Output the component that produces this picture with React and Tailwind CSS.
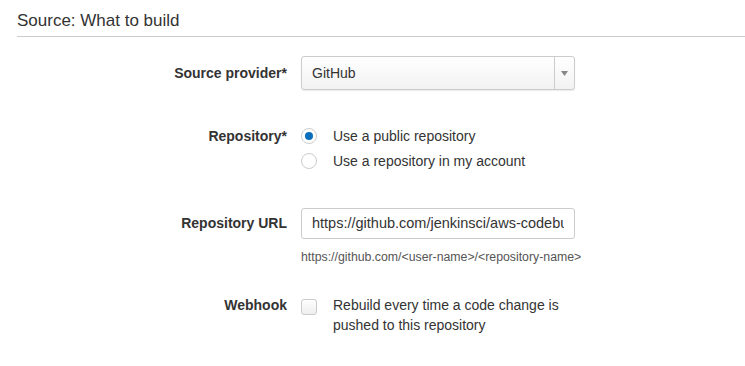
import React from 'react';

const App = () => {
  return (
    <div className="min-h-screen bg-white font-['Liberation_Sans',Arial,sans-serif] text-[#333]">
      <div className="pl-[17px] pt-[10px]">
        <h2 className="text-[17px] leading-[22px] text-[#333] pb-[4px] border-b border-[#ccc]">Source: What to build</h2>
      </div>

      {/* Source provider */}
      <div className="flex items-center mt-[19px]">
        <div className="w-[287px] text-right font-bold text-[14px]">Source provider*</div>
        <div className="ml-[14px] w-[274px] h-[34px] flex border border-[#ccc] rounded-[3px] bg-gradient-to-b from-white to-[#f2f2f2] shadow-[0_1px_1px_rgba(0,0,0,0.08)]">
          <div className="flex-1 flex items-center pl-[10px] text-[14px]">GitHub</div>
          <div className="w-[20px] border-l border-[#ccc] flex items-center justify-center">
            <svg width="7" height="5" viewBox="0 0 7 5"><path d="M0 0h7L3.5 5z" fill="#888" /></svg>
          </div>
        </div>
      </div>

      {/* Repository */}
      <div className="flex mt-[36px]">
        <div className="w-[287px] text-right font-bold text-[14px] leading-[20px]">Repository*</div>
        <div className="ml-[14px] flex flex-col gap-[5px] text-[14px]">
          <label className="flex items-center h-[20px]">
            <span className="w-[16px] h-[16px] rounded-full border border-[#ccc] bg-white flex items-center justify-center">
              <span className="w-[8px] h-[8px] rounded-full bg-[#0a6ebd]" />
            </span>
            <span className="ml-[16px]">Use a public repository</span>
          </label>
          <label className="flex items-center h-[20px]">
            <span className="w-[16px] h-[16px] rounded-full border border-[#ccc] bg-white" />
            <span className="ml-[16px]">Use a repository in my account</span>
          </label>
        </div>
      </div>

      {/* Repository URL */}
      <div className="flex mt-[37px]">
        <div className="w-[287px] text-right font-bold text-[14px] leading-[31px]">Repository URL</div>
        <div className="ml-[14px]">
          <div className="w-[274px] h-[31px] border border-[#ccc] rounded-[3px] flex items-center px-[10px] text-[14.5px]">
            <span className="block overflow-hidden whitespace-nowrap">https://github.com/jenkinsci/aws-codebuild-plugin</span>
          </div>
          <div className="text-[12.3px] text-[#555] mt-[9px] whitespace-nowrap">https://github.com/&lt;user-name&gt;/&lt;repository-name&gt;</div>
        </div>
      </div>

      {/* Webhook */}
      <div className="flex mt-[29px]">
        <div className="w-[287px] text-right font-bold text-[14px] leading-[20px]">Webhook</div>
        <div className="ml-[14px] flex items-start">
          <span className="mt-[4px] w-[16px] h-[16px] rounded-[3px] border border-[#ccc] bg-gradient-to-b from-white to-[#eee]" />
          <div className="ml-[16px] text-[14px] leading-[20px] w-[260px]">Rebuild every time a code change is pushed to this repository</div>
        </div>
      </div>
    </div>
  );
};

export default App;
